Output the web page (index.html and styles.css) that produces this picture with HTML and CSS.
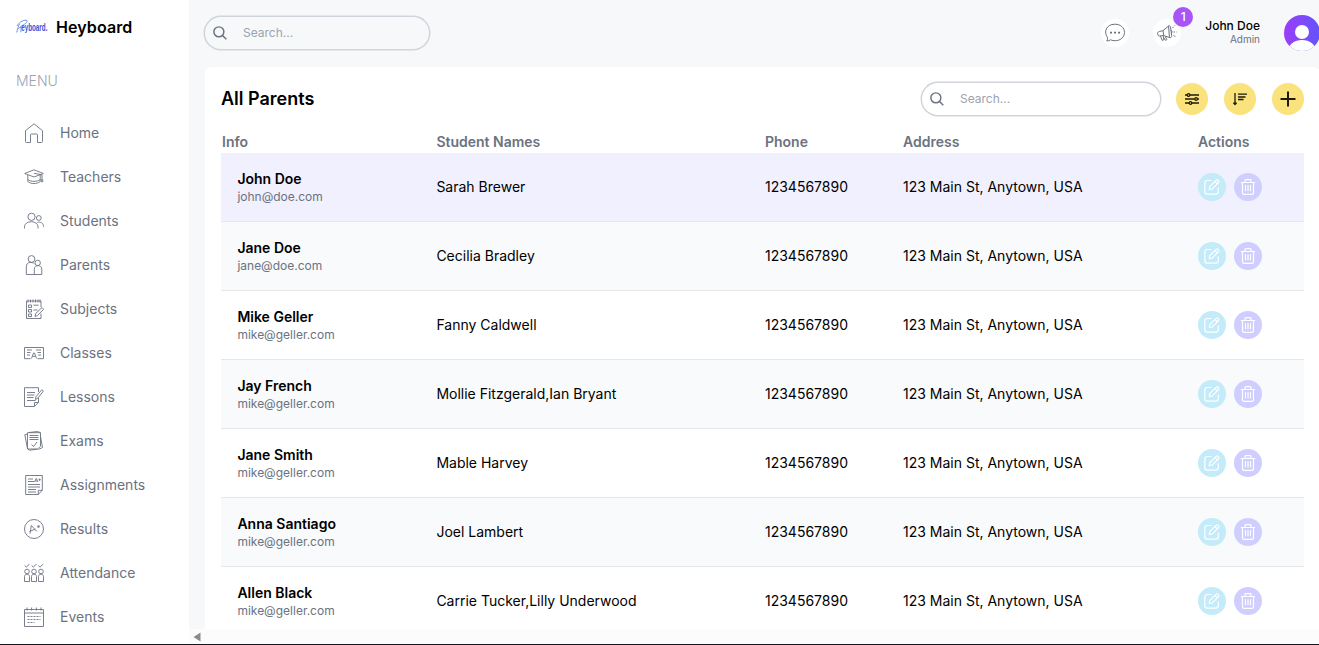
FILE: index.html
```
<!DOCTYPE html>
<html lang="en">

<head>
    <meta charset="utf-8">
    <title>Heyboard</title>
    <link rel="stylesheet" href="styles.css">
</head>

<body>

    <!-- shared icons -->
    <svg class="sprite" aria-hidden="true">
        <symbol id="search" viewBox="0 0 16 16">
            <circle cx="6.7" cy="6.7" r="5.7" />
            <path d="M10.900 10.900l4.300 4.300" />
        </symbol>
        <symbol id="edit" viewBox="0 0 16 16">
            <path d="M7.500 1.500H3.200C1.700 1.500.8 2.600.8 4v8.500c0 1.600 1 2.700 2.500 2.700h8.400c1.600 0 2.600-1.200 2.600-2.700V8.500" />
            <path d="M5.300 10.600l.5-3L12 1.400c1.500-1.300 3.700.6 2.500 2.300L8.200 10z M11 2.500l2.500 2.500" />
        </symbol>
        <symbol id="trash" viewBox="0 0 16 16">
            <path d="M.8 3.500h14.400M5 3.300V1.500C5 1 5.300.7 5.800.7h4.400c.5 0 .8.3.8.8v1.800M2.500 3.500v10.200c0 1 .7 1.600 1.600 1.600h7.800c.9 0 1.600-.6 1.600-1.600V3.500M5.500 6.300v6M8 6.300v6M10.500 6.300v6" />
        </symbol>
    </svg>

    <div class="wrapper">
        <aside class="sidebar">
            <a class="logo" href="#">
                <svg width="32" height="16" viewBox="0 0 32 16">
                    <path d="M.7 13.500C1.500 10 2.500 7 3.500 5M1 7C3.500 2.500 9 .2 11 1.600c.8 2-2.500 3.600-6.500 6M2.200 9.600l3-1.900-.4 5.600" />
                    <text x="5.200" y="7.400" transform="scale(1 1.650)">eyboard.</text>
                </svg>
                <span>Heyboard</span>
            </a>
            <span class="menu-title">MENU</span>
            <nav class="menu">
                <a href="#">
                    <svg viewBox="0 0 20 20"><path d="M1.500 18.500V7.700L10 .8l8.500 6.900v10.800c0 .5-.4 1-1 1h-4V12c0-.6-.4-1-1-1h-5c-.6 0-1 .4-1 1v7.500h-4c-.6 0-1-.5-1-1z" /></svg>
                    <span>Home</span>
                </a>
                <a href="#">
                    <svg viewBox="0 0 20 20"><path d="M.7 6.500L10 2.800l9.300 3.700L10 10z M3.800 8v6.500c3 2.700 9.400 2.700 12.400 0V8M3.800 12.500c3 2.500 9.400 2.500 12.400 0M10 6.300l8 1.500v5M17.200 12.800h1.600v2h-1.600z" /></svg>
                    <span>Teachers</span>
                </a>
                <a href="#">
                    <svg viewBox="0 0 20 20"><circle cx="7.500" cy="5.800" r="3.600" /><circle cx="14.800" cy="7" r="2.400" /><path d="M.5 17.500v-1.700c0-6.800 13.500-6.800 13.500 0v1.700M13.300 11.500c3-1.200 6.200.5 6.200 4v.6" /></svg>
                    <span>Students</span>
                </a>
                <a href="#">
                    <svg viewBox="0 0 20 20"><circle cx="7.500" cy="4" r="3.400" /><circle cx="13.700" cy="7.900" r="2.700" /><path d="M10.800 19.500H2.300v-7.700c0-5.500 6.300-5 8-3M10.300 19.500v-5.300c0-4.800 7.500-4.800 7.500 0v5.300z" /></svg>
                    <span>Parents</span>
                </a>
                <a href="#">
                    <svg viewBox="0 0 20 20"><path d="M17 8V2H2.500v17.500H17v-5M4 .5v3M6.500.5v3M9 .5v3M11.500.5v3M14 .5v3M16 .5v3M4.500 6h3v2.500h-3zM4.500 10.500h3V13h-3zM4.500 15h3v2.500h-3zM9.500 6.200h5M9.500 11h4M11 17.500l.7-3 6.300-6 1.700 1.700-6.200 6.300z" /></svg>
                    <span>Subjects</span>
                </a>
                <a href="#">
                    <svg viewBox="0 0 20 20"><path d="M6.500 15.700h-6V4.500h19v11.200h-6M3 7h5M12 7h5M3 9.500h3.500M13.500 9.500H17M3 12h3M14 12h3M7.500 15.500l2-5.500h1l2 5.500M8.500 13.300h3" /></svg>
                    <span>Classes</span>
                </a>
                <a href="#">
                    <svg viewBox="0 0 20 20"><path d="M14.500 5V.7H.5v18.800h10l4-4.200V11M10.500 19.300v-3.800h4M3 5.500h8M3 8h7.500M3 10.500h6.500M3 13.500h8.500M11.500 12.700l.5-3 5.800-7 1.600 1.400-5.600 7z" /></svg>
                    <span>Lessons</span>
                </a>
                <a href="#">
                    <svg viewBox="0 0 20 20"><path d="M3.500 1.700h13v13.500L13.700 18H3.500zM3.500 3l-2.700.7 2.700 14M4 18.200l1.500 1 8-1M5 1.500L13.500.5l3 1.200M16.500 5.500l2 11-4 2M5.500 4.500h9M5.500 6.500h9M5.500 8.500h9M7.500 13.500l2 2 3.500-4.500" /></svg>
                    <span>Exams</span>
                </a>
                <a href="#">
                    <svg viewBox="0 0 20 20"><path d="M1.700.5h16.600v14.700l-4 4.300H1.700zM14.300 19.300v-4h4M4 4h5M4 6.500h6M4 9.500h12M4 12h12M4 14.500h8M4 17h8M10.500 7l1.800-3.700L14 7M11.300 6h2M14.500 4.700h2.300M15.600 3.600v2.300" /></svg>
                    <span>Assignments</span>
                </a>
                <a href="#">
                    <svg viewBox="0 0 20 20"><circle cx="10" cy="10" r="9.500" /><path d="M6 14.500l1.300-8 5.500 6M5.500 12.500l6-2.500M13 8l3-1M14 6l1 3" /></svg>
                    <span>Results</span>
                </a>
                <a href="#">
                    <svg viewBox="0 0 20 20"><path d="M.7 2.500l1.700 1.700 3-3.200M7.700 2.500l1.700 1.700 3-3.200M14.300 2.500L16 4.200 19.300 1M.5 18.500v-5c0-3 5-3 5 0v5zM7.500 18.500v-5c0-3 5-3 5 0v5zM14.500 18.500v-5c0-3 5-3 5 0v5z" /><circle cx="3" cy="8.500" r="2.300" /><circle cx="10" cy="8.500" r="2.300" /><circle cx="17" cy="8.500" r="2.300" /></svg>
                    <span>Attendance</span>
                </a>
                <a href="#">
                    <svg viewBox="0 0 20 20"><path d="M.5 2.500h19v17H.5zM.5 6h19M3 .5v3M7.600.5v3M12.400.5v3M17 .5v3" /><path stroke-dasharray="2 1" d="M3.500 9.500h13M3.500 12.500h13M3.500 15.500h7" /></svg>
                    <span>Events</span>
                </a>
            </nav>
        </aside>

        <div class="content">
            <header class="navbar">
                <label class="search search--nav">
                    <svg><use href="#search" /></svg>
                    <input type="text" placeholder="Search...">
                </label>
                <div class="user">
                    <div class="round">
                        <svg viewBox="0 0 20 20"><path d="M2.500 14.500C-1.500 9 1 1.200 10 1.200c5.500 0 9.500 3.500 9.500 8.300 0 6.500-7.500 10-14 7.300-1 .8-2.300 1.200-3.700 1.200.7-1 .9-2.200.7-3.500z" /><path class="dots" d="M5 9.700h2M9 9.700h2M13 9.700h2" /></svg>
                    </div>
                    <div class="round">
                        <svg viewBox="0 0 20 20"><path d="M.8 9.500c-.5 2 .2 3.500 1.500 3.500l4-.5 6.200 2L11.500 3 6 7.700l-3.700.8c-.7.1-1.300.5-1.500 1zM6 7.700l.7 4.800M3.500 13l1.600 4.300 2-.6-1-4M6.500 14.500l2.300 3 1-1-1.500-3M11.500 3c1-1 1.700 0 2 1l1.200 8.500c0 1.500-1 2.700-2.200 2M13.800 7.500c1.500 0 1.500 2.500.5 2.500" /><path stroke-dasharray="1.500 1" d="M15.500 5l2.300-2.500M16.500 9h3M16.500 12.500l2.500 1.500" /></svg>
                        <div class="badge">1</div>
                    </div>
                    <div class="user-name">
                        <span class="name">John Doe</span>
                        <span class="role">Admin</span>
                    </div>
                    <svg class="avatar" viewBox="0 0 36 36">
                        <defs>
                            <linearGradient id="purple">
                                <stop offset="0" stop-color="#9b3df9" />
                                <stop offset="1" stop-color="#6255fb" />
                            </linearGradient>
                            <clipPath id="circle"><circle cx="18" cy="18" r="18" /></clipPath>
                        </defs>
                        <g clip-path="url(#circle)">
                            <rect width="36" height="36" fill="url(#purple)" />
                            <circle cx="18" cy="17" r="7" fill="#fff" />
                            <ellipse cx="18" cy="36" rx="14" ry="11" fill="#fff" />
                        </g>
                    </svg>
                </div>
            </header>

            <main class="card">
                <div class="card-top">
                    <h1>All Parents</h1>
                    <div class="tools">
                        <label class="search search--table">
                            <svg><use href="#search" /></svg>
                            <input type="text" placeholder="Search...">
                        </label>
                        <button><svg width="14" height="14" viewBox="0 0 14 14"><path d="M0 3h2.300M5 3h9M0 7h9.700M12.500 7H14M0 11h4M7 11h7" /><circle cx="3.600" cy="3" r="1.300" /><circle cx="11.100" cy="7" r="1.300" /><circle cx="5.500" cy="11" r="1.300" /></svg></button>
                        <button><svg width="14" height="14" viewBox="0 0 14 14"><path d="M2 1v11M.4 10.700L2 12.500l1.600-1.800M5 2.200h9M5 5h7.500M5 7.500h5.500" /></svg></button>
                        <button><svg width="16" height="16" viewBox="0 0 16 16"><path stroke-width="2" d="M8 .5v15M.5 8h15" /></svg></button>
                    </div>
                </div>
                <table>
                    <thead>
                        <tr>
                            <th class="col-info">Info</th>
                            <th class="col-students">Student Names</th>
                            <th class="col-phone">Phone</th>
                            <th class="col-address">Address</th>
                            <th>Actions</th>
                        </tr>
                    </thead>
                    <tbody>
                        <tr class="active">
                            <td class="info"><h3>John Doe</h3><p>john@doe.com</p></td>
                            <td>Sarah Brewer</td>
                            <td>1234567890</td>
                            <td>123 Main St, Anytown, USA</td>
                            <td><div class="actions"><a class="edit"><svg><use href="#edit" /></svg></a><a class="delete"><svg><use href="#trash" /></svg></a></div></td>
                        </tr>
                        <tr>
                            <td class="info"><h3>Jane Doe</h3><p>jane@doe.com</p></td>
                            <td>Cecilia Bradley</td>
                            <td>1234567890</td>
                            <td>123 Main St, Anytown, USA</td>
                            <td><div class="actions"><a class="edit"><svg><use href="#edit" /></svg></a><a class="delete"><svg><use href="#trash" /></svg></a></div></td>
                        </tr>
                        <tr>
                            <td class="info"><h3>Mike Geller</h3><p>mike@geller.com</p></td>
                            <td>Fanny Caldwell</td>
                            <td>1234567890</td>
                            <td>123 Main St, Anytown, USA</td>
                            <td><div class="actions"><a class="edit"><svg><use href="#edit" /></svg></a><a class="delete"><svg><use href="#trash" /></svg></a></div></td>
                        </tr>
                        <tr>
                            <td class="info"><h3>Jay French</h3><p>mike@geller.com</p></td>
                            <td>Mollie Fitzgerald,Ian Bryant</td>
                            <td>1234567890</td>
                            <td>123 Main St, Anytown, USA</td>
                            <td><div class="actions"><a class="edit"><svg><use href="#edit" /></svg></a><a class="delete"><svg><use href="#trash" /></svg></a></div></td>
                        </tr>
                        <tr>
                            <td class="info"><h3>Jane Smith</h3><p>mike@geller.com</p></td>
                            <td>Mable Harvey</td>
                            <td>1234567890</td>
                            <td>123 Main St, Anytown, USA</td>
                            <td><div class="actions"><a class="edit"><svg><use href="#edit" /></svg></a><a class="delete"><svg><use href="#trash" /></svg></a></div></td>
                        </tr>
                        <tr>
                            <td class="info"><h3>Anna Santiago</h3><p>mike@geller.com</p></td>
                            <td>Joel Lambert</td>
                            <td>1234567890</td>
                            <td>123 Main St, Anytown, USA</td>
                            <td><div class="actions"><a class="edit"><svg><use href="#edit" /></svg></a><a class="delete"><svg><use href="#trash" /></svg></a></div></td>
                        </tr>
                        <tr>
                            <td class="info"><h3>Allen Black</h3><p>mike@geller.com</p></td>
                            <td>Carrie Tucker,Lilly Underwood</td>
                            <td>1234567890</td>
                            <td>123 Main St, Anytown, USA</td>
                            <td><div class="actions"><a class="edit"><svg><use href="#edit" /></svg></a><a class="delete"><svg><use href="#trash" /></svg></a></div></td>
                        </tr>
                    </tbody>
                </table>
            </main>

            <div class="scrollbar">
                <svg width="8" height="10" viewBox="0 0 8 10"><path d="M7.500.5v9L.5 5z" /></svg>
            </div>
        </div>
    </div>

</body>

</html>
```
FILE: styles.css
```
* {
    box-sizing: border-box;
    margin: 0;
    padding: 0;
}

body {
    font-family: Inter, "Liberation Sans", sans-serif;
    font-size: 14px;
    line-height: 20px;
    color: #000;
    overflow: hidden;
}

a {
    color: inherit;
    text-decoration: none;
}

svg {
    display: block;
    flex-shrink: 0;
    fill: none;
    stroke: #6b7280;
}

.sprite {
    display: none;
}

.wrapper {
    display: flex;
    height: 645px;
    border-bottom: 1px solid #15171f;
}

/* sidebar */

.sidebar {
    width: 189px;
    flex-shrink: 0;
    padding: 15px 16px;
    overflow: hidden;
}

.logo {
    display: flex;
    align-items: center;
    gap: 8px;
    height: 24px;
    font-size: 16px;
    font-weight: 600;
    letter-spacing: .1px;
}

.logo svg {
    stroke: #4361d8;
    stroke-width: .7;
}

.logo text {
    font-family: "Liberation Sans", sans-serif;
    font-size: 6.3px;
    font-weight: bold;
    fill: #3555d8;
    stroke: none;
    letter-spacing: 0;
}

.menu-title {
    display: block;
    margin: 32px 0;
    color: #9ca3af;
    font-weight: 300;
}

.menu {
    display: flex;
    flex-direction: column;
    gap: 24px;
    color: #6b7280;
}

.menu a {
    display: flex;
    align-items: center;
    gap: 16px;
    padding-left: 8px;
}

.menu svg {
    width: 20px;
    height: 20px;
    stroke-width: .9;
}

/* right side */

.content {
    display: flex;
    flex-direction: column;
    flex: 1;
    min-width: 0;
    background: #f7f8fa;
    overflow: hidden;
}

.navbar {
    display: flex;
    align-items: center;
    justify-content: space-between;
    flex-shrink: 0;
    width: 1131px;
    height: 66px;
    margin-bottom: 1px;
    padding-left: 16px;
}

.search {
    display: flex;
    align-items: center;
    gap: 8px;
    height: 32px;
    padding: 0 8px;
    border-radius: 16px;
    box-shadow: 0 0 0 1.5px #d1d5db;
}

.search--nav {
    width: 224px;
}

.search--table {
    width: 238px;
}

.search svg {
    width: 14px;
    height: 14px;
    stroke-width: 1.7;
}

.search input {
    width: 100%;
    padding: 8px;
    border: none;
    outline: none;
    background: transparent;
    font: 12px/16px Inter, "Liberation Sans", sans-serif;
}

.search input::placeholder {
    color: #9ca3af;
}

.user {
    display: flex;
    align-items: center;
    gap: 24px;
}

.round {
    position: relative;
    display: flex;
    align-items: center;
    justify-content: center;
    width: 28px;
    height: 28px;
    border-radius: 50%;
    background: #fff;
}

.round svg {
    width: 20px;
    height: 20px;
}

.round .dots {
    stroke-width: 1.7;
}

.badge {
    position: absolute;
    top: -12px;
    right: -12px;
    width: 20px;
    height: 20px;
    border-radius: 50%;
    background: #a855f7;
    color: #fff;
    font-size: 12px;
    font-weight: 500;
    text-align: center;
}

.user-name {
    display: flex;
    flex-direction: column;
    text-align: right;
}

.name {
    font-size: 12px;
    font-weight: 500;
    line-height: 12px;
}

.role {
    color: #6b7280;
    font-size: 10px;
    line-height: 15px;
}

.avatar {
    width: 36px;
    height: 36px;
    stroke: none;
}

.card {
    flex: 1;
    width: 1115px;
    min-height: 0;
    margin-left: 16px;
    padding: 14px 16px 0;
    border-radius: 6px 6px 0 0;
    background: #fff;
    overflow: hidden;
}

.card-top {
    display: flex;
    align-items: center;
    justify-content: space-between;
    height: 36px;
}

.card-top h1 {
    font-size: 18px;
    font-weight: 600;
}

.tools {
    display: flex;
    align-items: center;
    gap: 16px;
}

.tools button {
    display: flex;
    align-items: center;
    justify-content: center;
    width: 32px;
    height: 32px;
    border: none;
    border-radius: 50%;
    background: #fae27c;
}

.tools button svg {
    stroke: #1f1a0a;
    stroke-width: 1.3;
}

table {
    width: 1083px;
    margin-top: 14px;
    border-spacing: 0;
    table-layout: fixed;
}

th {
    height: 22px;
    padding: 0 1px;
    color: #6b7280;
    font-weight: 600;
    text-align: left;
}

.col-info {
    width: 214.4px;
}

.col-students {
    width: 328.6px;
}

.col-phone {
    width: 138px;
}

.col-address {
    width: 295px;
}

td {
    height: 69px;
    padding: 0 1px;
    border-bottom: 1px solid #e5e7eb;
    white-space: nowrap;
}

tbody tr:nth-child(even) {
    background: #f8fafc;
}

tbody tr.active {
    background: #f1f0ff;
}

.info {
    padding-left: 16.4px;
}

.info h3 {
    font-size: 14px;
    font-weight: 600;
    line-height: 20px;
}

.info p {
    color: #6b7280;
    font-size: 12px;
    line-height: 16px;
}

.actions {
    display: flex;
    gap: 8px;
}

.actions a {
    display: flex;
    align-items: center;
    justify-content: center;
    width: 28px;
    height: 28px;
    border-radius: 50%;
}

.actions svg {
    width: 16px;
    height: 16px;
    stroke: #fff;
    stroke-width: 1.2;
}

.edit {
    background: #c3ebfa;
}

.delete {
    background: #cfceff;
}

.scrollbar {
    display: flex;
    align-items: center;
    flex-shrink: 0;
    height: 15px;
    padding-left: 4px;
    background: #fcfcfc;
}

.scrollbar svg {
    fill: #8b8b8b;
    stroke: none;
}
```
